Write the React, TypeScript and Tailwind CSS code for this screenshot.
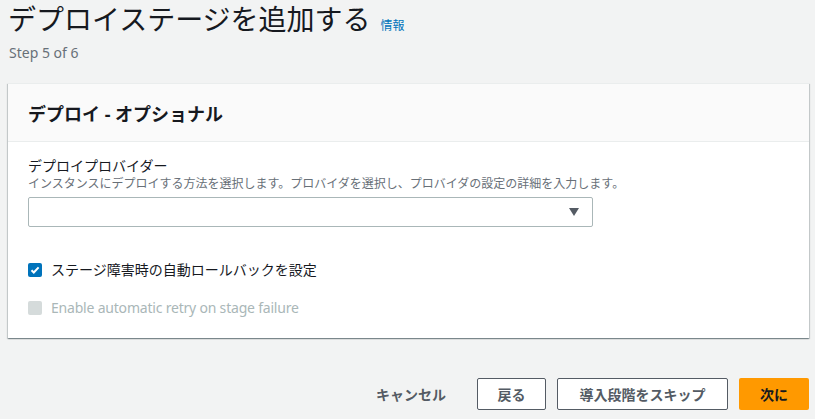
const jp = '[font-family:"Noto_Sans","Noto_Sans_CJK_JP",sans-serif]';

export default function App() {
  return (
    <div className={`min-h-[419px] w-[815px] bg-[#f2f3f3] pl-2 pr-[6px] ${jp} text-[#16191f]`}>
      {/* Page header */}
      <div className="flex items-baseline gap-[10px] pt-[1px]">
        <h1 className="text-[28px] leading-[36px] font-normal">デプロイステージを追加する</h1>
        <a className="text-[12px] text-[#0073bb]">情報</a>
      </div>
      <div className="mt-[6px] text-[14px] leading-[20px] text-[#687078] pl-[1px]">Step 5 of 6</div>

      {/* Card */}
      <div className="mt-[20px] bg-white shadow-[0_1px_1px_0_rgba(0,28,36,0.3),1px_1px_1px_0_rgba(0,28,36,0.15),-1px_1px_1px_0_rgba(0,28,36,0.15)] border-t border-[#eaeded]">
        <div className="h-[58px] bg-[#fafafa] border-b border-[#eaeded] px-5 flex items-center">
          <h2 className="text-[18px] font-bold leading-[24px] pt-[2px]">デプロイ - オプショナル</h2>
        </div>
        <div className="px-5 pt-[14px] pb-[20px]">
          <div className="text-[14px] leading-[20px]">デプロイプロバイダー</div>
          <div className="text-[12px] leading-[16px] text-[#687078]">
            インスタンスにデプロイする方法を選択します。プロバイダを選択し、プロバイダの設定の詳細を入力します。
          </div>
          <div className="mt-[5px] w-[565px] h-[30px] border border-[#aab7b8] rounded-[2px] bg-white flex items-center justify-end pr-[13px]">
            <svg width="10" height="8" viewBox="0 0 10 8">
              <path d="M0 0h10L5 8z" fill="#545b64" />
            </svg>
          </div>

          <label className="mt-[33px] flex items-center gap-[9px] text-[14px] leading-[20px]">
            <span className="w-[14px] h-[14px] rounded-[2px] bg-[#0073bb] flex items-center justify-center">
              <svg width="10" height="10" viewBox="0 0 10 10">
                <path d="M1.5 5.2l2.3 2.3L8.6 2.4" stroke="#fff" strokeWidth="2" fill="none" />
              </svg>
            </span>
            ステージ障害時の自動ロールバックを設定
          </label>
          <label className="mt-[18px] flex items-center gap-[9px] text-[14px] leading-[20px] text-[#aab7b8]">
            <span className="w-[14px] h-[14px] rounded-[2px] bg-[#d5dbdb]" />
            <span className="tracking-[-0.2px]">Enable automatic retry on stage failure</span>
          </label>
        </div>
      </div>

      {/* Actions */}
      <div className="mt-[40px] flex items-center justify-end gap-[11px] text-[14px] font-bold">
        <button className="px-5 h-[32px] text-[#545b64]">キャンセル</button>
        <button className="w-[69px] h-[32px] border border-[#545b64] rounded-[2px] bg-white text-[#545b64]">戻る</button>
        <button className="w-[171px] h-[32px] border border-[#545b64] rounded-[2px] bg-white text-[#545b64]">導入段階をスキップ</button>
        <button className="w-[70px] h-[32px] rounded-[2px] bg-[#ff9900] text-[#16191f]">次に</button>
      </div>
    </div>
  );
}
